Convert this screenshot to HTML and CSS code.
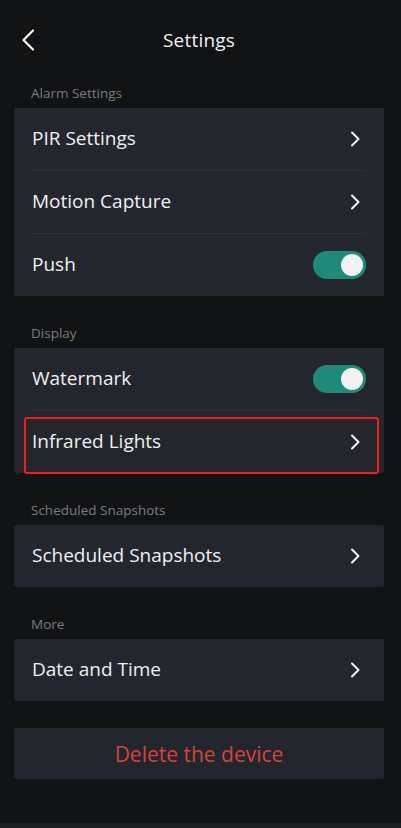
FILE: index.html
```html
<!DOCTYPE html>
<html lang="en">
<head>
<meta charset="utf-8">
<title>Settings</title>
<link rel="stylesheet" href="styles.css">
</head>
<body>
<div class="screen">
  <header class="topbar">
    <svg class="back" width="14" height="22" viewBox="0 0 14 22"><path d="M12 1.5 L2.5 11 L12 20.5" fill="none" stroke="#f2f2f2" stroke-width="2.2" stroke-linecap="round" stroke-linejoin="round"/></svg>
    <h1 class="title">Settings</h1>
  </header>

  <div class="section-label">Alarm Settings</div>
  <div class="card">
    <div class="row"><span class="label">PIR Settings</span><svg class="chev" width="11" height="16" viewBox="0 0 11 16"><path d="M2 1.5 L8.5 8 L2 14.5" fill="none" stroke="#f2f2f2" stroke-width="2" stroke-linecap="round" stroke-linejoin="round"/></svg></div>
    <div class="divider"></div>
    <div class="row"><span class="label">Motion Capture</span><svg class="chev" width="11" height="16" viewBox="0 0 11 16"><path d="M2 1.5 L8.5 8 L2 14.5" fill="none" stroke="#f2f2f2" stroke-width="2" stroke-linecap="round" stroke-linejoin="round"/></svg></div>
    <div class="divider"></div>
    <div class="row"><span class="label">Push</span><span class="toggle"><span class="knob"></span></span></div>
  </div>

  <div class="section-label">Display</div>
  <div class="card">
    <div class="row"><span class="label">Watermark</span><span class="toggle"><span class="knob"></span></span></div>
    <div class="divider"></div>
    <div class="row"><span class="label">Infrared Lights</span><svg class="chev" width="11" height="16" viewBox="0 0 11 16"><path d="M2 1.5 L8.5 8 L2 14.5" fill="none" stroke="#f2f2f2" stroke-width="2" stroke-linecap="round" stroke-linejoin="round"/></svg><span class="mark"></span></div>
  </div>

  <div class="section-label">Scheduled Snapshots</div>
  <div class="card">
    <div class="row"><span class="label">Scheduled Snapshots</span><svg class="chev" width="11" height="16" viewBox="0 0 11 16"><path d="M2 1.5 L8.5 8 L2 14.5" fill="none" stroke="#f2f2f2" stroke-width="2" stroke-linecap="round" stroke-linejoin="round"/></svg></div>
  </div>

  <div class="section-label">More</div>
  <div class="card">
    <div class="row"><span class="label">Date and Time</span><svg class="chev" width="11" height="16" viewBox="0 0 11 16"><path d="M2 1.5 L8.5 8 L2 14.5" fill="none" stroke="#f2f2f2" stroke-width="2" stroke-linecap="round" stroke-linejoin="round"/></svg></div>
  </div>

  <div class="card delete">Delete the device</div>
</div>
</body>
</html>
```

FILE: styles.css
```css
html, body {
  margin: 0;
  padding: 0;
  background: #121314;
}
body {
  font-family: "Open Sans", "Noto Sans", sans-serif;
  color: #f0f0f0;
}
.screen {
  width: 401px;
  height: 828px;
  box-sizing: border-box;
  padding: 0 17px 0 14px;
  background: #121314;
  border-bottom: 5px solid #1d1e20;
}
.topbar {
  position: relative;
  height: 80px;
  display: flex;
  align-items: center;
  justify-content: center;
}
.back {
  position: absolute;
  left: 7px;
  top: 29px;
}
.title {
  margin: 0;
  font-size: 19px;
  font-weight: 500;
  color: #f2f2f2;
  letter-spacing: 0.2px;
}
.section-label {
  height: 28px;
  line-height: 26px;
  padding-left: 17px;
  font-size: 13.5px;
  color: #7a7c80;
}
.card {
  background: #23262d;
  border-radius: 2px;
  padding: 0 18px;
  margin-bottom: 24px;
}
.row {
  position: relative;
  height: 62px;
  display: flex;
  align-items: center;
  justify-content: space-between;
}
.label {
  font-size: 19px;
  line-height: 24px;
  margin-top: -2px;
  color: #f0f0f0;
}
.chev {
  margin-right: 5px;
}
.divider {
  height: 1px;
  background: #2c3038;
}
.toggle {
  position: relative;
  width: 53px;
  height: 28px;
  border-radius: 14px;
  background: #1e8a77;
  display: flex;
  align-items: center;
  justify-content: flex-end;
  padding-right: 3px;
  box-sizing: border-box;
}
.knob {
  width: 22px;
  height: 22px;
  border-radius: 50%;
  background: #f2f2f2;
}
.mark {
  position: absolute;
  left: -8px;
  right: -13px;
  top: 6px;
  bottom: -1px;
  border: 2.5px solid #f51c1c;
  border-radius: 3px;
}
.delete {
  margin-top: 27px;
  height: 51px;
  display: flex;
  align-items: center;
  justify-content: center;
  font-size: 21px;
  color: #d5433b;
}
```
